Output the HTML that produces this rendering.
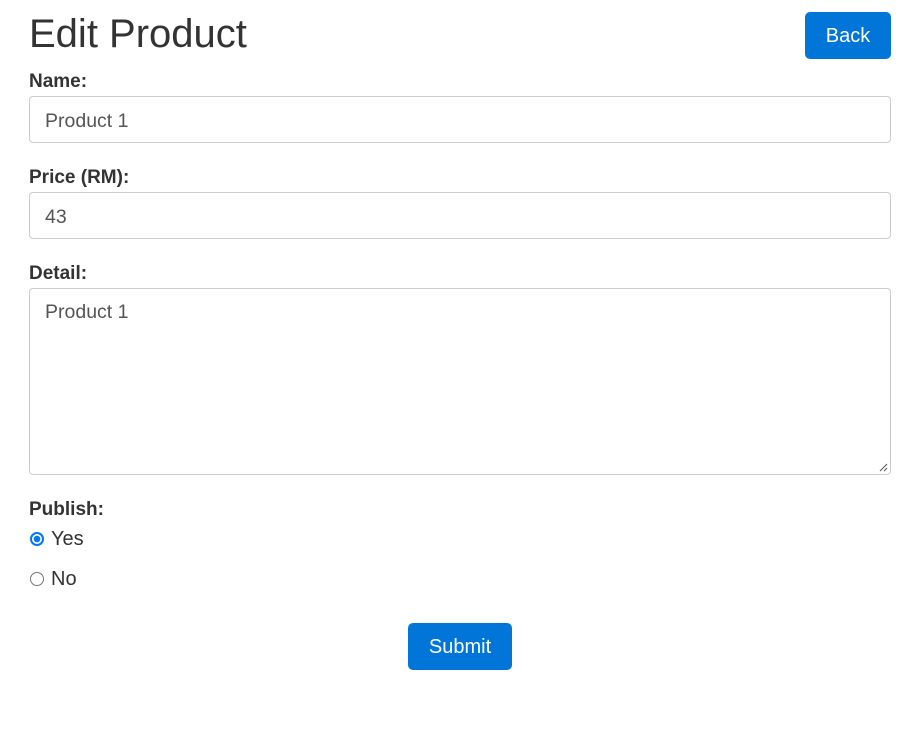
<!DOCTYPE html>
<html><head><style>
*{box-sizing:border-box}
body{margin:0;font-family:"Liberation Sans",sans-serif;color:#333;background:#fff;width:908px;height:748px;position:relative}
.a{position:absolute}
h1{position:absolute;left:29px;top:10px;margin:0;font-weight:normal;font-size:40px;line-height:48px;color:#333}
.lbl{position:absolute;left:29px;font-weight:bold;font-size:19px;line-height:20px}
.inp{position:absolute;left:29px;width:862px;border:1px solid #ccc;border-radius:4px;font-size:19.5px;color:#555;padding:13px 15px 11px;line-height:22px}
.btn{position:absolute;background:#0275d8;color:#fff;border-radius:5px;font-size:20px;text-align:center;line-height:48px;height:47px}
.r{position:absolute;left:29px;font-size:20px;line-height:22px}
.rad{display:inline-block;width:14px;height:14px;border-radius:50%;border:1px solid #767676;vertical-align:-1px;margin-right:7px;margin-left:1px;background:#fff}
.on{border:2px solid #0075ff;background:radial-gradient(circle,#0075ff 3px,#fff 3.5px)}
</style></head><body>
<h1>Edit Product</h1>
<div class="btn" style="left:805px;top:12px;width:86px">Back</div>
<div class="lbl" style="top:72px">Name:</div>
<div class="inp" style="top:96px;height:47px">Product 1</div>
<div class="lbl" style="top:168px">Price (RM):</div>
<div class="inp" style="top:192px;height:47px">43</div>
<div class="lbl" style="top:264px">Detail:</div>
<div class="inp" style="top:288px;height:187px;padding-top:12px">Product 1
<svg class="a" style="right:2px;bottom:2px" width="9" height="9"><path d="M8 1L1 8M8 5L5 8" stroke="#555" stroke-width="1"/></svg></div>
<div class="lbl" style="top:500px">Publish:</div>
<div class="r" style="top:528px"><span class="rad on"></span>Yes</div>
<div class="r" style="top:568px"><span class="rad"></span>No</div>
<div class="btn" style="left:408px;top:623px;width:104px">Submit</div>
</body></html>
